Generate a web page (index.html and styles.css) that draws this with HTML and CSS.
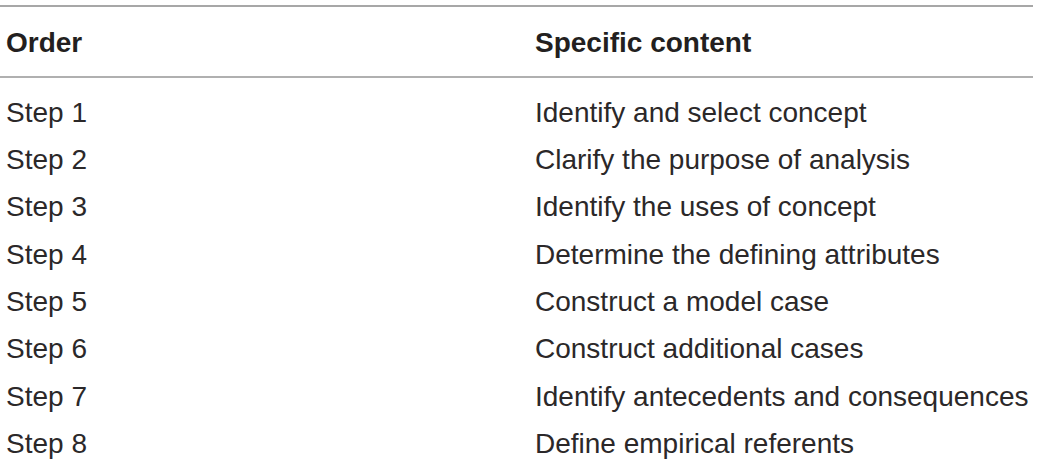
FILE: index.html
```html
<!DOCTYPE html>
<html lang="en">
<head>
<meta charset="utf-8">
<link rel="stylesheet" href="styles.css">
</head>
<body>
<div class="table">
  <div class="head row">
    <div class="cell c1">Order</div>
    <div class="cell c2">Specific content</div>
  </div>
  <div class="body">
    <div class="row"><div class="cell c1">Step 1</div><div class="cell c2">Identify and select concept</div></div>
    <div class="row"><div class="cell c1">Step 2</div><div class="cell c2">Clarify the purpose of analysis</div></div>
    <div class="row"><div class="cell c1">Step 3</div><div class="cell c2">Identify the uses of concept</div></div>
    <div class="row"><div class="cell c1">Step 4</div><div class="cell c2">Determine the defining attributes</div></div>
    <div class="row"><div class="cell c1">Step 5</div><div class="cell c2">Construct a model case</div></div>
    <div class="row"><div class="cell c1">Step 6</div><div class="cell c2">Construct additional cases</div></div>
    <div class="row"><div class="cell c1">Step 7</div><div class="cell c2">Identify antecedents and consequences</div></div>
    <div class="row"><div class="cell c1">Step 8</div><div class="cell c2">Define empirical referents</div></div>
  </div>
</div>
</body>
</html>
```
FILE: styles.css
```css
html, body {
  margin: 0;
  padding: 0;
  background: #ffffff;
}
body {
  font-family: "Liberation Sans", Arial, sans-serif;
  color: #2b2829;
  font-size: 28px;
}
.table {
  width: 1033px;
  margin-top: 5px;
  border-top: 2px solid #a7a7a7;
}
.row {
  display: grid;
  grid-template-columns: 535px 1fr;
  line-height: 47.3px;
  height: 47.3px;
}
.cell {
  white-space: nowrap;
}
.c1 {
  padding-left: 6px;
}
.head {
  font-weight: bold;
  color: #231f20;
  padding-top: 11.5px;
  padding-bottom: 10px;
  border-bottom: 2px solid #b0b0b0;
}
.body {
  padding-top: 11px;
}
```
